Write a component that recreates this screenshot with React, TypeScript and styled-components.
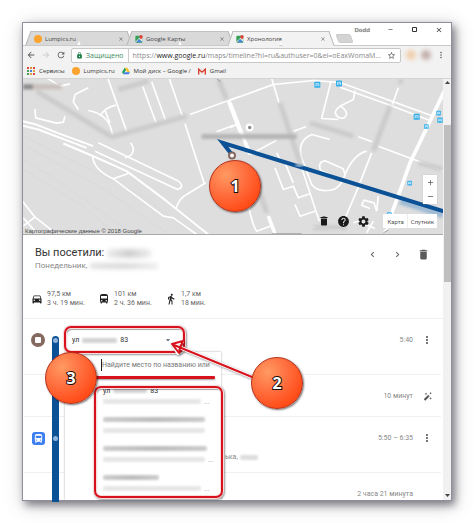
import React from "react";
import styled, { createGlobalStyle, css } from "styled-components";
import {
  MdAdd,
  MdArrowBack,
  MdArrowDropDown,
  MdArrowForward,
  MdChevronLeft,
  MdChevronRight,
  MdClose,
  MdDelete,
  MdDirectionsBus,
  MdDirectionsCar,
  MdDirectionsWalk,
  MdHelp,
  MdLock,
  MdMoreVert,
  MdRefresh,
  MdRemove,
  MdSettings,
  MdStarBorder,
} from "react-icons/md";

const UI_FONT = '"Open Sans", "Noto Sans", sans-serif';
const PAGE_FONT = 'Roboto, "Noto Sans", sans-serif';
const ROUTE = "#0b5196";
const RED = "#d8121c";

const GlobalStyle = createGlobalStyle`
  *, *::before, *::after { box-sizing: border-box; }
  body { margin: 0; background: #fff; font-family: ${PAGE_FONT}; }
  button, input { font: inherit; color: inherit; border: 0; background: none; padding: 0; margin: 0; }
  svg { display: block; flex: none; }
`;

const Desktop = styled.div`
  padding: 22px;
  overflow: hidden;
`;

const BrowserWindow = styled.div`
  position: relative;
  border: 1px solid #8e8e9e;
  background: #fff;
  box-shadow: 3px 4px 8px rgba(60, 60, 70, 0.6), 2px 4px 18px rgba(90, 90, 100, 0.3);
`;

/* ---------- Browser chrome ---------- */

const TabStrip = styled.div`
  display: flex;
  align-items: flex-end;
  height: 23px;
  padding-left: 5px;
  background: #fff;
  border-bottom: 1px solid #cacaca;
  font: 6px/14px ${UI_FONT};
  color: #444;
`;

const Tab = styled.div<{ $active?: boolean }>`
  position: relative;
  z-index: ${(p) => (p.$active ? 2 : 0)};
  display: flex;
  align-items: center;
  gap: 3px;
  flex: 0 1 101px;
  height: 15px;
  padding: 0 5px 0 6px;
  margin-bottom: -1px;

  &::before,
  &::after {
    content: "";
    position: absolute;
    z-index: -1;
    top: 0;
    bottom: ${(p) => (p.$active ? 0 : 1)}px;
    width: 51%;
    background: ${(p) => (p.$active ? "#f2f2f2" : "#d9d9d9")};
    border-top: 1px solid #c2c2c2;
  }
  &::before {
    left: 0;
    border-left: 1px solid #b8b8b8;
    transform: skewX(-20deg);
  }
  &::after {
    right: 0;
    border-right: 1px solid #b8b8b8;
    transform: skewX(20deg);
  }
`;

const TabTitle = styled.span`
  flex: 1;
  white-space: nowrap;
`;

const IconButton = styled.button<{ $color?: string }>`
  display: flex;
  align-items: center;
  justify-content: center;
  flex: none;
  color: ${(p) => p.$color ?? "#5a5a5a"};
`;

const NewTab = styled.button`
  width: 15px;
  height: 9px;
  margin: 0 0 2px 6px;
  background: #d4d4d4;
  border: 1px solid #cacaca;
  border-radius: 2px;
  transform: skewX(20deg);
`;

const WindowControls = styled.div`
  display: flex;
  align-items: center;
  align-self: flex-start;
  gap: 17px;
  height: 13px;
  margin-left: auto;
  padding-right: 8px;
  color: #333;
`;

const UserName = styled.span`
  color: #888;
  font-weight: 600;
  text-shadow: 0 0 1px #999;
`;

const Toolbar = styled.div`
  display: flex;
  align-items: center;
  gap: 5px;
  height: 18px;
  padding: 0 5px 0 3px;
  background: #f2f2f2;
`;

const AddressBar = styled.div`
  display: flex;
  align-items: center;
  flex: 1;
  min-width: 0;
  height: 15px;
  padding: 0 4px;
  border: 1px solid #c8c8c8;
  border-radius: 2px;
  background: #fff;
  font: 7px/13px ${UI_FONT};
  color: #888;
`;

const Secure = styled.span`
  margin-left: 3px;
  padding-right: 4px;
  color: #3d8b5f;
`;

const Url = styled.span`
  flex: 1;
  min-width: 0;
  overflow: hidden;
  white-space: nowrap;
  padding-left: 5px;
  box-shadow: inset 1px 0 #ccc;

  b {
    font-weight: 400;
    color: #222;
  }
`;

const Avatar = styled.span<{ $color: string }>`
  width: 10px;
  height: 10px;
  border-radius: 5px;
  background: ${(p) => p.$color};
  filter: blur(2px);
`;

const BookmarksBar = styled.nav`
  display: flex;
  align-items: center;
  gap: 7px;
  height: 15px;
  padding: 0 4px;
  background: #f2f2f2;
  border-bottom: 1px solid #d4d4d4;
  font: 6px/14px ${UI_FONT};
`;

const Bookmark = styled.a`
  display: flex;
  align-items: center;
  gap: 4px;
  color: #333;
  text-decoration: none;
  white-space: nowrap;
`;

const OrangeDot = styled.span`
  width: 8px;
  height: 8px;
  border-radius: 4px;
  background: #fba32f;
`;

/* ---------- Page ---------- */

const Viewport = styled.div`
  display: flex;
`;

const Page = styled.main`
  flex: 1;
  min-width: 0;
`;

const Scrollbar = styled.div`
  display: flex;
  flex-direction: column;
  align-items: center;
  width: 8px;
  padding: 1px 0 2px;
  background: #f1f1f1;
  color: #444;
`;

const Thumb = styled.div`
  width: 7px;
  height: 157px;
  margin: 41px 0 auto;
  background: #bfbfbf;
`;

const MapArea = styled.section`
  position: relative;
  height: 156px;
  background: #dedede;
  border-bottom: 1px solid #aaa;

  > svg {
    width: 100%;
    height: 100%;
  }
`;

const Attribution = styled.small`
  position: absolute;
  left: 2px;
  bottom: -1px;
  font: 6px/8px "Liberation Sans", sans-serif;
  color: #444;
`;

const ZoomControl = styled.div`
  position: absolute;
  right: 6px;
  bottom: 30px;
  display: grid;
  width: 14px;
  height: 29px;
  background: #fff;
  box-shadow: 0 0 1px #aaa;
`;

const MapTools = styled.div`
  position: absolute;
  right: 6px;
  bottom: 6px;
  display: flex;
  align-items: center;
  gap: 7px;
`;

const MapTypes = styled.div`
  display: flex;
  margin-left: 6px;
  height: 14px;
  background: #fff;
  font-size: 6px;
  color: #555;

  button {
    padding: 0 3px;
  }
  button:first-child {
    padding-left: 4px;
  }
  button + button {
    border-left: 1px solid #eee;
  }
`;

const Summary = styled.header`
  height: 84px;
  padding: 11px 11px 0 12px;
  border-bottom: 1px solid #f0f0f0;
`;

const SummaryTop = styled.div`
  display: flex;
  justify-content: space-between;
  align-items: flex-start;
`;

const Title = styled.h1`
  display: flex;
  align-items: center;
  gap: 3px;
  margin: 0;
  font-size: 11px;
  line-height: 14px;
  font-weight: 400;
  color: #333;
`;

const DateLine = styled.p`
  display: flex;
  align-items: center;
  gap: 3px;
  margin: 0;
  font-size: 8px;
  line-height: 12px;
  color: #888;
`;

const Pager = styled.div`
  display: flex;
  align-items: center;
  gap: 14px;
  height: 16px;
  padding-right: 2px;
`;

const Stats = styled.div`
  display: flex;
  margin: 18px 0 0 -4px;
`;

const Stat = styled.div`
  display: flex;
  align-items: center;
  gap: 4px;
  width: 67px;
  font-size: 7px;
  line-height: 9px;
  color: #666;
  white-space: nowrap;

  svg {
    color: #222;
  }
`;

const Smudge = styled.span<{ $w: number; $h?: number; $tone?: string }>`
  display: block;
  flex: none;
  width: ${(p) => p.$w}px;
  height: ${(p) => p.$h ?? 5}px;
  background: ${(p) => p.$tone ?? "#ddd"};
  border-radius: 2px;
  filter: blur(${(p) => ((p.$h ?? 5) > 5 ? 2 : 1)}px);
`;

const Timeline = styled.section`
  position: relative;
  padding: 0 2px 0 1px;
`;

const Row = styled.article<{ $h: number }>`
  display: grid;
  grid-template-columns: 28px 7px 1fr auto 28px;
  height: ${(p) => p.$h}px;
  border-bottom: 1px solid #f0f0f0;
  font-size: 7px;
  line-height: 14px;
  color: #888;

  &:last-child {
    border-bottom: 0;
  }
`;

const Cell = styled.div`
  display: flex;
  align-items: center;
  justify-content: center;
  height: 14px;
  margin-top: 14px;
`;

const Rail = styled.div<{ $start?: boolean }>`
  margin-bottom: -1px;
  background: ${ROUTE};
  z-index: 1;
  ${(p) =>
    p.$start &&
    css`
      margin-top: 17px;
      border-radius: 4px 4px 0 0;
    `}
`;

const Stop = styled.i<{ $top: number }>`
  display: block;
  width: 5px;
  height: 5px;
  margin: ${(p) => p.$top}px 1px 0;
  border-radius: 3px;
  background: #8fb4dc;
`;

const StopBadge = styled.span`
  display: grid;
  place-items: center;
  width: 14px;
  height: 14px;
  border-radius: 7px;
  background: #84695f;

  &::after {
    content: "";
    width: 6px;
    height: 6px;
    border-radius: 1px;
    background: #fff;
  }
`;

const BusBadge = styled.span`
  display: grid;
  place-items: center;
  width: 13px;
  height: 13px;
  border-radius: 3px;
  background: #3d7ff0;
  color: #fff;
`;

const Details = styled.div`
  display: flex;
  align-items: center;
  gap: 2px;
  height: 14px;
  margin: 33px 0 0 166px;
`;

const PlaceButton = styled.button`
  display: flex;
  align-items: center;
  gap: 3px;
  width: 101px;
  height: 14px;
  margin: 14px 0 0 13px;
  color: #333;

  svg {
    margin-left: auto;
    color: #456;
  }
`;

/* The place picker floats above the rows below the trigger. */
const Picker = styled.div`
  position: absolute;
  top: 33px;
  left: 42px;
  bottom: 0;
  z-index: 1;
  width: 156px;
  padding: 7px 9px 0 36px;
  background: #fff;
  box-shadow: 0 0 2px #aaa;
  clip-path: inset(-2px -3px 0 -2px);

  input {
    display: block;
    width: 100%;
    height: 12px;
    margin-bottom: 14px;
    border-left: 1px solid #222;
    outline: 0;
    font-size: 7px;
    color: #777;
  }
  input::placeholder {
    color: #777;
  }
`;

const Options = styled.ul`
  list-style: none;
  margin: 0;
  padding: 0 0 0 2px;
`;

const Option = styled.li`
  display: flex;
  flex-direction: column;
  gap: 6px;
  height: 29px;
  padding-top: 3px;
`;

const OptionName = styled.span`
  display: flex;
  align-items: center;
  gap: 3px;
  height: 5px;
  font-size: 7px;
  color: #333;
`;

const OptionHint = styled(OptionName)`
  color: #999;
`;

/* ---------- Annotations ---------- */

const Badge = styled.span<{ $x: number; $y: number }>`
  position: absolute;
  z-index: 4;
  left: ${(p) => p.$x}px;
  top: ${(p) => p.$y}px;
  display: grid;
  place-items: center;
  width: 52px;
  height: 52px;
  border: 1px solid #b4301a;
  border-radius: 26px;
  background: radial-gradient(circle at 32% 28%, #ff9a62 0, #ff7040 38%, #ff4c18 75%, #f83c0c 100%);
  box-shadow: 1px 1px 2px rgba(0, 0, 0, 0.55);
  font: 700 16px/20px ${UI_FONT};
  color: #fff;
  -webkit-text-stroke: 2px #1c0d08;
  paint-order: stroke fill;
`;

const Frame = styled.div<{ $x: number; $y: number; $w: number; $h: number }>`
  position: absolute;
  z-index: 2;
  left: ${(p) => p.$x}px;
  top: ${(p) => p.$y}px;
  width: ${(p) => p.$w}px;
  height: ${(p) => p.$h}px;
  border: 2px solid ${RED};
  border-radius: 7px;
  box-shadow: 0 0 0 1px #f7dcdc, 1px 1px 2px 1px rgba(0, 0, 0, 0.4), inset 0 0 0 1px #f7dcdc,
    inset 1px 2px 1px rgba(0, 0, 0, 0.35);
`;

const Underline = styled.div`
  position: absolute;
  z-index: 2;
  left: 72px;
  top: 57px;
  width: 120px;
  height: 3px;
  border-radius: 1px;
  background: ${RED};
  box-shadow: 0 1px 2px rgba(0, 0, 0, 0.4);
`;

const Arrow = styled.svg`
  position: absolute;
  z-index: 3;
  left: 143px;
  top: 17px;
  filter: drop-shadow(1px 1px 1px rgba(0, 0, 0, 0.4));
`;

/* ---------- Drawings ---------- */

const MapsIcon = () => (
  <svg width="8" height="8" viewBox="0 0 24 24">
    <rect x="1" y="2" width="21" height="21" rx="3" fill="#36a15b" />
    <path d="M1 20 18 4h4v17L12 12 2 23z" fill="#e9eef2" />
    <path d="M12 13 22 22H4z" fill="#4a82e4" />
    <path d="M18 0a5 5 0 0 1 5 5c0 4-5 8-5 8s-5-4-5-8a5 5 0 0 1 5-5" fill="#dc4436" />
  </svg>
);

const AppsIcon = () => (
  <svg width="8" height="8" viewBox="0 0 8 8">
    {["#d94a3d", "#e2893c", "#d94a3d", "#4a9b58", "#4a82d6", "#d9a63d", "#4a9b58", "#d9a63d", "#d94a3d"].map((c, i) => (
      <rect key={i} x={(i % 3) * 3} y={Math.floor(i / 3) * 3} width="2" height="2" fill={c} />
    ))}
  </svg>
);

const DriveIcon = () => (
  <svg width="8" height="8" viewBox="0 0 24 24">
    <path d="M8 2h8l8 14h-8z" fill="#fbc02d" />
    <path d="M8 2 0 16l4 6 8-13z" fill="#1c9d58" />
    <path d="M4 22h16l4-6H8z" fill="#3f7de8" />
  </svg>
);

const GmailIcon = () => (
  <svg width="8" height="7" viewBox="0 0 24 20">
    <path d="M0 1h24v18H0z" fill="#f3e9e7" />
    <path d="M2 19V3l10 9 10-9v16" fill="none" stroke="#d6402f" strokeWidth="4" />
  </svg>
);

const WandIcon = () => (
  <svg width="9" height="9" viewBox="0 0 24 24" fill="#555">
    <path d="m2 19 12-12 4 4L6 23z" />
    <path d="m12 9 4 4" stroke="#fff" strokeWidth="1" />
    <path d="m8 1 1 3 3 1-3 1-1 3-1-3-3-1 3-1zM20 0l1 2 3 1-3 1-1 3-1-3-2-1 2-1zM20 13l1 3 3 1-3 1-1 3-1-3-2-1 2-1z" />
  </svg>
);

const TransitStop = ({ x, y, s = 18 }: { x: number; y: number; s?: number }) => (
  <g transform={`translate(${x - s / 2} ${y - s / 2})`}>
    <rect width={s} height={s} rx="2" fill="#35aee8" />
    <path d={`M${s * 0.25} ${s * 0.75}V${s * 0.3}H${s * 0.75}V${s * 0.75}M${s * 0.25} ${s * 0.55}H${s * 0.75}`} fill="none" stroke="#e8f7ff" strokeWidth="2" />
  </g>
);

const CityMap = () => (
  <svg viewBox="69 237 1260 468" preserveAspectRatio="xMidYMid slice" fill="none">
    <defs>
      <filter id="soft" x="-20%" y="-50%" width="140%" height="200%">
        <feGaussianBlur stdDeviation="5" />
      </filter>
    </defs>
    <g stroke="#d7d7d7" strokeWidth="2">
      <path d="M69 410 200 475 430 590 560 690M69 480 170 540 380 690M69 510 250 620 330 690M80 440 330 580 500 700" />
    </g>
    <g transform="translate(30 225)" stroke="#fff" strokeWidth="5" strokeLinejoin="round">
      <path d="M36 140 75 149 150 178 250 215M36 153 85 165 230 220" strokeWidth="6" />
      <path d="M160 207 245 243 350 290 470 380 595 480" strokeWidth="6" />
      <path d="M265 205 500 317Q528 335 503 345L255 230" />
      <path d="M248 245Q250 285 310 313L355 297M310 313 460 425 490 430 560 480M498 402Q508 370 530 360L587 325" />
      <path d="M525 148 582 325M477 10 517 125M398 35 438 145M425 22 467 138M293 10 350 170M540 120 690 65" />
      <path d="M235 40 195 60 190 82 205 105M235 108Q303 120 308 188M318 92Q285 98 270 125M285 108 300 145" />
      <path d="M75 103 77 130 140 146 160 143 165 125M110 10 150 35 180 28M362 205Q378 228 362 243L345 250" />
      <path d="M36 378 75 428 125 467M75 428 40 455M40 430 75 470M620 172 670 152" />
      <path d="M655 78 692 175" strokeWidth="11" />
    </g>
    <g transform="translate(690 225)" stroke="#fff" strokeWidth="5" strokeLinejoin="round">
      <path d="M0 77 130 30 250 18 330 24 480 78 610 125M330 38 480 92 600 138M125 12 147 85M303 20 275 132 325 135" />
      <path d="M375 48 370 75 330 95Q305 115 325 128 345 138 350 118 345 100 330 95" />
      <path d="M0 85 60 240" strokeWidth="11" />
      <path d="M650 35 605 130 540 265 510 350 480 430" strokeWidth="11" />
      <path d="M0 160 20 150M60 240 140 197M190 170 228 157M385 187 427 202M445 215 570 262 640 290M505 40 487 90" />
      <path d="M425 235 380 350 345 432M215 280 268 440" />
      <path d="M300 195 245 180Q200 200 215 250L245 330Q260 350 290 348 330 350 345 300 370 240 410 230" />
      <path d="M345 300 340 283 285 259Q262 262 272 288L320 310" />
      <path d="M135 280 160 345 190 335 205 370 240 358M140 235 150 255M165 265 190 325M195 390 210 425 255 410" />
      <path d="M50 350Q60 440 80 470L120 455M440 410 432 385 402 377 395 392 420 402M445 365 440 410M370 445 385 440 435 462M410 475 430 440" />
      <path d="M115 425 135 478" strokeWidth="11" />
      <path d="M250 458 330 465M460 475 490 440" />
    </g>
    <g stroke="#cbcbcb" strokeWidth="15" filter="url(#soft)">
      <path d="M110 275 335 412 560 350M355 270 445 245M655 240 680 300M840 310 900 490M930 370 1060 410M1170 320 1120 455M1255 490 1329 510M780 580 800 640" />
      <path d="M605 411H890" stroke="#b4b4b4" />
      <path d="M69 262H100" stroke="#888" />
      <path d="M100 262H185" stroke="#c9c0bc" />
      <path d="M940 685H1040M1195 246h14" />
    </g>
    <g stroke="#777" strokeWidth="2">
      <path d="M650 237 662 247M815 703H905M1150 700 1165 692" />
    </g>
    <circle cx="749" cy="384" r="12" fill="#fff" />
    <circle cx="749" cy="384" r="5" fill="#888" />
    <TransitStop x={952} y={256} />
    <TransitStop x={1017} y={252} />
    <TransitStop x={1250} y={352} />
    <TransitStop x={1279} y={381} s={14} />
    <TransitStop x={1316} y={341} s={14} />
    <TransitStop x={1320} y={362} s={16} />
    <TransitStop x={1229} y={551} s={14} />
    <TransitStop x={1168} y={645} s={14} />
    <path d="M1200 606 1329 648" stroke="#9ab8d4" strokeWidth="16" filter="url(#soft)" />
    <path d="M695 464 668 430 1340 638" stroke={ROUTE} strokeWidth="12" />
    <path d="M888 495 908 500" stroke="#9db3c8" strokeWidth="12" filter="url(#soft)" />
    <circle cx="696" cy="468" r="9" fill="#fff" stroke="#84695f" strokeWidth="6" />
  </svg>
);

const Redacted = ({ name, hint, tail }: { name: number; hint: number; tail?: string }) => (
  <Option>
    <OptionName>
      <Smudge $w={name} $tone="linear-gradient(90deg,#ccc,#bdbdbd,#ccc)" />
    </OptionName>
    <OptionHint>
      <Smudge $w={hint} $tone="#e6e6e6" />
      {tail}
    </OptionHint>
  </Option>
);

const tabs = [
  { title: "Lumpics.ru", icon: <OrangeDot /> },
  { title: "Google Карты", icon: <MapsIcon /> },
  { title: "Хронология", icon: <MapsIcon />, active: true },
];

const stats = [
  { icon: <MdDirectionsCar size={12} />, distance: "97,5 км", time: "3 ч. 19 мин." },
  { icon: <MdDirectionsBus size={12} />, distance: "101 км", time: "2 ч. 36 мин." },
  { icon: <MdDirectionsWalk size={12} />, distance: "1,7 км", time: "18 мин." },
];

export default function App() {
  return (
    <>
      <GlobalStyle />
      <Desktop>
        <BrowserWindow>
          <TabStrip>
            {tabs.map((t) => (
              <Tab key={t.title} $active={t.active}>
                {t.icon}
                <TabTitle>{t.title}</TabTitle>
                <IconButton aria-label="Закрыть вкладку">
                  <MdClose size={6} />
                </IconButton>
              </Tab>
            ))}
            <NewTab aria-label="Новая вкладка" />
            <WindowControls>
              <UserName>Dodd</UserName>
              <IconButton aria-label="Свернуть" $color="#333">
                <MdRemove size={7} />
              </IconButton>
              <IconButton aria-label="Развернуть" $color="#333">
                <svg width="7" height="7" viewBox="0 0 7 7">
                  <path d="M1.500 1.500h4v4h-4z" fill="none" stroke="currentColor" />
                </svg>
              </IconButton>
              <IconButton aria-label="Закрыть" $color="#333">
                <MdClose size={8} />
              </IconButton>
            </WindowControls>
          </TabStrip>

          <Toolbar>
            <IconButton aria-label="Назад">
              <MdArrowBack size={10} />
            </IconButton>
            <IconButton aria-label="Вперёд" $color="#ccc">
              <MdArrowForward size={10} />
            </IconButton>
            <IconButton aria-label="Обновить">
              <MdRefresh size={10} />
            </IconButton>
            <AddressBar>
              <MdLock size={7} color="#1c7d45" />
              <Secure>Защищено</Secure>
              <Url>
                https://<b>www.google.ru</b>/maps/timeline?hl=ru&amp;authuser=0&amp;ei=oEaxWomaM...
              </Url>
              <IconButton aria-label="Добавить в закладки">
                <MdStarBorder size={9} />
              </IconButton>
            </AddressBar>
            <Avatar $color="#f0cfae" />
            <Avatar $color="#c3b0ac" />
            <IconButton aria-label="Меню">
              <MdMoreVert size={10} />
            </IconButton>
          </Toolbar>

          <BookmarksBar>
            <Bookmark href="#apps">
              <AppsIcon />
              Сервисы
            </Bookmark>
            <Bookmark href="#lumpics">
              <OrangeDot />
              Lumpics.ru
            </Bookmark>
            <Bookmark href="#drive">
              <DriveIcon />
              Мой диск – Google /
            </Bookmark>
            <Bookmark href="#gmail">
              <GmailIcon />
              Gmail
            </Bookmark>
          </BookmarksBar>

          <Viewport>
            <Page>
              <MapArea>
                <CityMap />
                <Attribution>Картографические данные © 2018 Google</Attribution>
                <ZoomControl>
                  <IconButton aria-label="Увеличить">
                    <MdAdd size={9} />
                  </IconButton>
                  <IconButton aria-label="Уменьшить">
                    <MdRemove size={9} />
                  </IconButton>
                </ZoomControl>
                <MapTools>
                  <IconButton aria-label="Удалить" $color="#1a1a1a">
                    <MdDelete size={12} />
                  </IconButton>
                  <IconButton aria-label="Справка" $color="#1a1a1a">
                    <MdHelp size={13} />
                  </IconButton>
                  <IconButton aria-label="Настройки" $color="#1a1a1a">
                    <MdSettings size={13} />
                  </IconButton>
                  <MapTypes>
                    <button>Карта</button>
                    <button>Спутник</button>
                  </MapTypes>
                </MapTools>
                <Badge $x={186} $y={81}>1</Badge>
              </MapArea>

              <Summary>
                <SummaryTop>
                  <div>
                    <Title>
                      Вы посетили: <Smudge $w={44} $h={9} $tone="linear-gradient(90deg,#eee,#cfcfcf,#eee)" />
                    </Title>
                    <DateLine>
                      Понедельник, <Smudge $w={68} $h={6} $tone="linear-gradient(90deg,#e2e2e2,#d8d8d8,#eee)" />
                    </DateLine>
                  </div>
                  <Pager>
                    <IconButton aria-label="Предыдущий день">
                      <MdChevronLeft size={11} />
                    </IconButton>
                    <IconButton aria-label="Следующий день">
                      <MdChevronRight size={11} />
                    </IconButton>
                    <IconButton aria-label="Удалить день">
                      <MdDelete size={13} />
                    </IconButton>
                  </Pager>
                </SummaryTop>
                <Stats>
                  {stats.map((s) => (
                    <Stat key={s.distance}>
                      {s.icon}
                      <div>
                        {s.distance}
                        <br />
                        {s.time}
                      </div>
                    </Stat>
                  ))}
                </Stats>
              </Summary>

              <Timeline>
                <div>
                  <Row $h={56}>
                    <Cell>
                      <StopBadge />
                    </Cell>
                    <Rail $start>
                      <Stop $top={2} />
                    </Rail>
                    <PlaceButton>
                      ул <Smudge $w={35} $tone="#d3d3d3" /> 83
                      <MdArrowDropDown size={10} />
                    </PlaceButton>
                    <Cell>5:40</Cell>
                    <Cell>
                      <IconButton aria-label="Ещё">
                        <MdMoreVert size={12} />
                      </IconButton>
                    </Cell>
                  </Row>
                  <Row $h={42}>
                    <span />
                    <Rail />
                    <span />
                    <Cell>10 минут</Cell>
                    <Cell>
                      <IconButton aria-label="Исправить">
                        <WandIcon />
                      </IconButton>
                    </Cell>
                  </Row>
                  <Row $h={56}>
                    <Cell>
                      <BusBadge>
                        <MdDirectionsBus size={11} />
                      </BusBadge>
                    </Cell>
                    <Rail>
                      <Stop $top={19} />
                    </Rail>
                    <Details>
                      ька, <Smudge $w={18} />
                    </Details>
                    <Cell>5:50 – 6:35</Cell>
                    <Cell>
                      <IconButton aria-label="Ещё">
                        <MdMoreVert size={12} />
                      </IconButton>
                    </Cell>
                  </Row>
                  <Row $h={27}>
                    <span />
                    <Rail />
                    <span />
                    <Cell>2 часа 21 минута</Cell>
                    <span />
                  </Row>
                </div>

                <Picker>
                  <input aria-label="Поиск места" placeholder="Найдите место по названию или" />
                  <Options>
                    <Option>
                      <OptionName>
                        ул <Smudge $w={34} $tone="#d3d3d3" /> 83
                      </OptionName>
                      <OptionHint>
                        <Smudge $w={98} $tone="#e6e6e6" />
                        ...
                      </OptionHint>
                    </Option>
                    <Redacted name={102} hint={102} />
                    <Redacted name={104} hint={102} tail="..." />
                    <Redacted name={56} hint={98} tail="..." />
                  </Options>
                </Picker>

                <Frame $x={41} $y={7} $w={121} $h={27} />
                <Frame $x={71} $y={67} $w={129} $h={112} />
                <Underline />
                <Arrow width="90" height="46" viewBox="0 0 90 46" fill="none" strokeLinecap="round" strokeLinejoin="round">
                  <path d="M8 9 86 41M16 6 7 8 12 17" stroke="#fff" strokeWidth="4" />
                  <path d="M8 9 86 41M17 5 6 8 13 17 14 12Z" stroke={RED} strokeWidth="2" />
                </Arrow>
                <Badge $x={228} $y={38}>2</Badge>
                <Badge $x={22} $y={33}>3</Badge>
              </Timeline>
            </Page>
            <Scrollbar>
              <svg width="5" height="4" viewBox="0 0 5 4">
                <path d="M0 4 2.500 1 5 4z" fill="currentColor" />
              </svg>
              <Thumb />
              <svg width="5" height="4" viewBox="0 0 5 4">
                <path d="M0 0 2.500 3 5 0z" fill="currentColor" />
              </svg>
            </Scrollbar>
          </Viewport>
        </BrowserWindow>
      </Desktop>
    </>
  );
}
